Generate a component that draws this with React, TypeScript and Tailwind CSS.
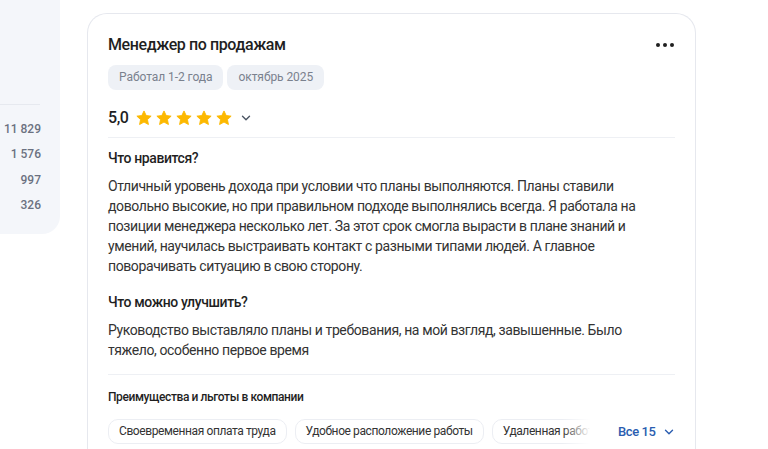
import React from "react";

const counts = ["11 829", "1 576", "997", "326"];
const perks = ["Своевременная оплата труда", "Удобное расположение работы", "Удаленная работа"];

function Star() {
  return (
    <svg width="18" height="18" viewBox="0 0 24 24" className="shrink-0">
      <path
        d="M12 2.6l2.9 6.1 6.6.8-4.9 4.6 1.3 6.6L12 17.4l-5.9 3.3 1.3-6.6-4.9-4.6 6.6-.8z"
        fill="#fcb800"
        stroke="#fcb800"
        strokeWidth="1.2"
        strokeLinejoin="round"
      />
    </svg>
  );
}

function Chevron({ color = "#4b5563" }: { color?: string }) {
  return (
    <svg width="14" height="14" viewBox="0 0 24 24" fill="none">
      <path d="M6 9l6 6 6-6" stroke={color} strokeWidth="2.4" strokeLinecap="round" strokeLinejoin="round" />
    </svg>
  );
}

export default function App() {
  return (
    <div className="flex h-[449px] w-[768px] overflow-hidden bg-white font-['Roboto',sans-serif] tracking-[-0.025em] text-[#1f1f1f]">
      {/* left stats panel */}
      <div className="h-[234px] w-[60px] shrink-0 rounded-br-[18px] bg-[#f4f6fa]">
        <div className="mt-[104px] h-px w-[40px] bg-[#e6e9ef]" />
        <div className="mt-[12px] flex w-[41px] flex-col items-end text-[12px] font-medium leading-[25.3px] tracking-normal text-[#6b7180]">
          {counts.map((c) => (
            <span key={c} className="whitespace-nowrap">{c}</span>
          ))}
        </div>
      </div>

      {/* review card */}
      <div className="ml-[27px] mt-[13px] w-[609px] shrink-0 rounded-t-[20px] border border-b-0 border-[#e6e8ee] px-[20px] pt-[19px]">
        <div className="flex items-center justify-between">
          <h2 className="text-[16px] font-medium leading-[24px]">Менеджер по продажам</h2>
          <div className="flex gap-[3px] pr-[1px]">
            <span className="h-[4px] w-[4px] rounded-full bg-[#1f1f1f]" />
            <span className="h-[4px] w-[4px] rounded-full bg-[#1f1f1f]" />
            <span className="h-[4px] w-[4px] rounded-full bg-[#1f1f1f]" />
          </div>
        </div>

        <div className="mt-[8px] flex gap-[4px]">
          <span className="rounded-[8px] bg-[#eef1f6] px-[11px] py-[4px] text-[12px] leading-[17px] tracking-[-0.005em] text-[#7a818e]">Работал 1-2 года</span>
          <span className="rounded-[8px] bg-[#eef1f6] px-[11px] py-[4px] text-[12px] leading-[17px] tracking-[-0.005em] text-[#7a818e]">октябрь 2025</span>
        </div>

        <div className="mt-[16px] flex h-[24px] items-center">
          <span className="mr-[6px] text-[16px] font-medium">5,0</span>
          <div className="flex gap-[2px]">
            <Star />
            <Star />
            <Star />
            <Star />
            <Star />
          </div>
          <span className="ml-[6px] flex items-center">
            <Chevron />
          </span>
        </div>

        <div className="mt-[7px] h-px bg-[#eef0f4]" />

        <h3 className="mt-[10px] text-[14px] font-medium leading-[20px]">Что нравится?</h3>
        <p className="mt-[8px] w-[530px] text-[14px] leading-[20px] text-[#333]">
          Отличный уровень дохода при условии что планы выполняются. Планы ставили довольно высокие, но при
          правильном подходе выполнялись всегда. Я работала на позиции менеджера несколько лет. За этот срок
          смогла вырасти в плане знаний и умений, научилась выстраивать контакт с разными типами людей. А
          главное поворачивать ситуацию в свою сторону.
        </p>

        <h3 className="mt-[16px] text-[14px] font-medium leading-[20px]">Что можно улучшить?</h3>
        <p className="mt-[8px] w-[530px] text-[14px] leading-[20px] text-[#333]">
          Руководство выставляло планы и требования, на мой взгляд, завышенные. Было тяжело, особенно первое
          время
        </p>

        <div className="mt-[14px] h-px bg-[#eef0f4]" />

        <h4 className="mt-[13px] text-[12px] font-medium leading-[18px]">Преимущества и льготы в компании</h4>

        <div className="mt-[13px] flex items-center">
          <div className="relative flex w-[482px] shrink-0 gap-[8px] overflow-hidden">
            {perks.map((p) => (
              <span
                key={p}
                className="shrink-0 whitespace-nowrap rounded-[10px] border border-[#eceef3] px-[10px] py-[4px] text-[12px] leading-[15px] text-[#333]"
              >
                {p}
              </span>
            ))}
            <div className="absolute right-0 top-0 h-full w-[28px] bg-gradient-to-r from-transparent to-white" />
          </div>
          <button className="ml-[28px] flex shrink-0 items-center gap-[6px] whitespace-nowrap text-[13px] font-medium text-[#2a5db0]">
            Все 15
            <Chevron color="#2a5db0" />
          </button>
        </div>
      </div>
    </div>
  );
}
